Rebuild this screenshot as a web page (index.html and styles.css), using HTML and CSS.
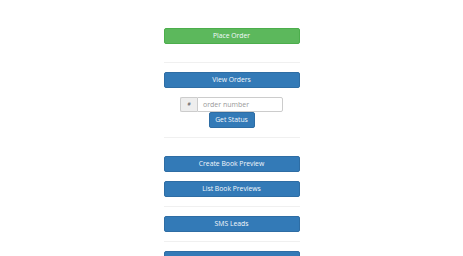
FILE: index.html
```html
<!DOCTYPE html>
<html>
<head>
<meta charset="utf-8">
<link rel="stylesheet" href="styles.css">
</head>
<body>
<div class="panel">
  <button class="btn btn-green">Place Order</button>
  <hr class="rule rule-first">
  <button class="btn btn-blue">View Orders</button>
  <div class="status-form">
    <div class="input-group">
      <span class="addon">#</span>
      <span class="field">order number</span>
    </div>
    <button class="btn btn-blue btn-small">Get Status</button>
  </div>
  <hr class="rule rule-second">
  <button class="btn btn-blue">Create Book Preview</button>
  <button class="btn btn-blue btn-gap">List Book Previews</button>
  <hr class="rule">
  <button class="btn btn-blue">SMS Leads</button>
  <hr class="rule">
  <button class="btn btn-blue btn-last">Manage Leads</button>
</div>
</body>
</html>
```
FILE: styles.css
```css
html, body {
  margin: 0;
  padding: 0;
  background: #ffffff;
}
body {
  font-family: "Open Sans", "Liberation Sans", sans-serif;
  height: 256px;
  overflow: hidden;
}
.panel {
  width: 136px;
  margin: 0 auto;
  padding-top: 28px;
  display: flex;
  flex-direction: column;
  align-items: stretch;
}
.btn {
  display: block;
  box-sizing: border-box;
  height: 16px;
  margin: 0;
  padding: 0;
  border-radius: 2px;
  border: 1px solid transparent;
  color: #f4f8fc;
  font-family: "Open Sans", "Liberation Sans", sans-serif;
  font-size: 6.8px;
  line-height: 14px;
  text-align: center;
}
.btn-green {
  background: #5cb85c;
  border-color: #4cae4c;
}
.btn-blue {
  background: #337ab7;
  border-color: #2e6da4;
}
.btn-gap {
  margin-top: 9px;
}
.btn-small {
  width: 46px;
  align-self: center;
}
.btn-last {
  line-height: 30px;
}
.rule {
  border: 0;
  border-top: 1px solid #f0f0f0;
  margin: 9px 0 9px;
  height: 0;
}
.rule-first {
  margin-top: 18px;
}
.rule-second {
  margin-bottom: 18px;
}
.status-form {
  display: flex;
  flex-direction: column;
  align-items: center;
  margin-top: 9px;
}
.input-group {
  display: flex;
  width: 103px;
  height: 15px;
  box-sizing: border-box;
}
.addon {
  width: 17px;
  box-sizing: border-box;
  background: #eeeeee;
  border: 1px solid #cccccc;
  border-right: 0;
  border-radius: 2px 0 0 2px;
  color: #555555;
  font-size: 5px;
  line-height: 13px;
  text-align: center;
}
.field {
  flex: 1;
  box-sizing: border-box;
  border: 1px solid #cccccc;
  border-radius: 0 2px 2px 0;
  color: #999999;
  font-size: 7px;
  line-height: 13px;
  padding-left: 5px;
}
```
